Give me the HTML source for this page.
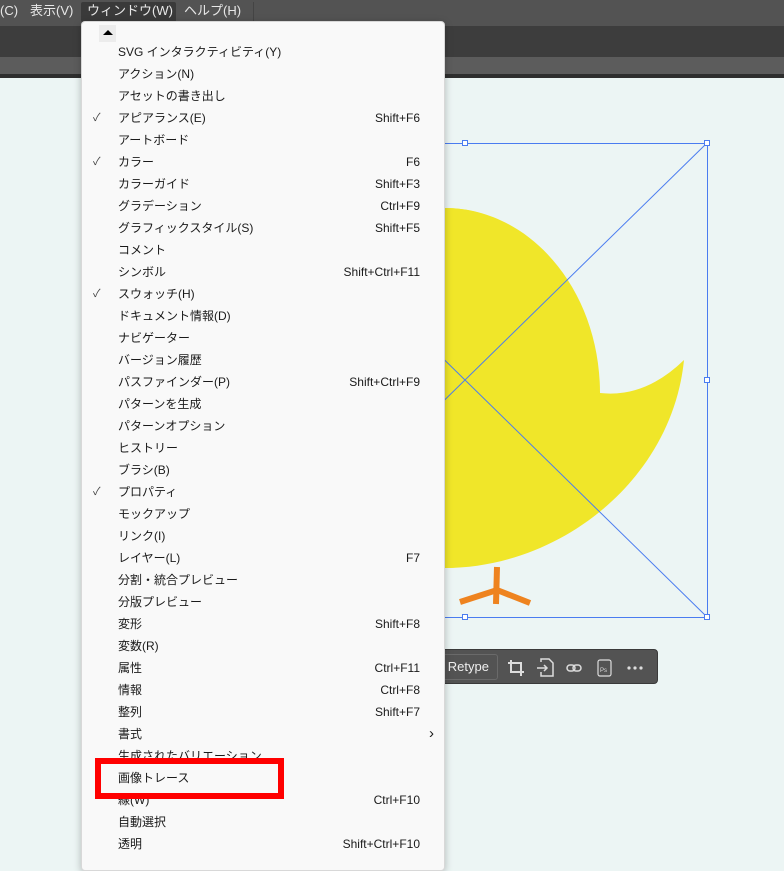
<!DOCTYPE html>
<html><head><meta charset="utf-8"><style>
*{margin:0;padding:0;box-sizing:border-box}
body{width:784px;height:859px;overflow:hidden;background:#ecf5f4;font-family:"Liberation Sans","Noto Sans CJK JP",sans-serif;position:relative}
.bar{position:absolute;left:0;top:0;width:784px;height:26px;background:#535353;color:#e8e8e8;font-size:13px}
.bar span{position:absolute;top:0;line-height:22px}
.band{position:absolute;left:0;top:26px;width:784px;height:31px;background:#3d3d3d}
.band2{position:absolute;left:0;top:57px;width:784px;height:17px;background:#5c5c5c}
.band3{position:absolute;left:0;top:74px;width:784px;height:4px;background:#2e2e2e}
.menu{position:absolute;left:81px;top:21px;width:364px;height:850px;background:#f9f9f9;border:1px solid #d8d8d8;border-radius:4px;box-shadow:0 2px 8px rgba(0,0,0,.25)}
.it{position:absolute;left:0;width:362px;height:22px;font-size:12px;color:#1a1a1a;line-height:22px}
.it .t{position:absolute;left:36px}
.it .s{position:absolute;right:24px}
.it .c{position:absolute;left:11px;font-size:11px;color:#444}
.red{position:absolute;left:95px;top:758px;width:189px;height:41px;border:6px solid #ff0000}
.tb{position:absolute;left:398px;top:649px;width:260px;height:35px;background:#535353;border-radius:4px;border:1px solid #3a3a3a}
</style></head><body>
<div class="bar">
<span style="left:0">(C)</span>
<span style="left:30px">表示(V)</span>
<div style="position:absolute;left:81px;top:2px;width:95px;height:20px;background:#3a3a3a;border-radius:2px"></div>
<span style="left:87px">ウィンドウ(W)</span>
<span style="left:184px">ヘルプ(H)</span>
<div style="position:absolute;left:253px;top:2px;width:1px;height:20px;background:#444"></div>
</div>
<div class="band"></div><div class="band2"></div><div class="band3"></div>
<svg style="position:absolute;left:0;top:0" width="784" height="859">
<ellipse cx="445" cy="388" rx="150" ry="180" fill="#f0e629"/>
<path d="M445 208 C530 208 600 290 600 393 Q645 398 684 360 C672 480 560 568 445 568 Z" fill="#f0e629"/>
<g stroke="#ee831f" stroke-width="6" fill="none"><path d="M497 567 L496 604"/><path d="M460 602 L497 590 L530 603"/></g>
<g stroke="#4a7cf0" stroke-width="1" fill="none">
<rect x="223.5" y="143.5" width="484" height="474"/>
<line x1="707" y1="143" x2="223" y2="617"/><line x1="223" y1="143" x2="707" y2="617"/>
</g>
<g fill="#fff" stroke="#4a7cf0"><rect x="462.5" y="140.5" width="5" height="5"/><rect x="704.5" y="140.5" width="5" height="5"/><rect x="704.5" y="377.5" width="5" height="5"/><rect x="704.5" y="614.5" width="5" height="5"/><rect x="462.5" y="614.5" width="5" height="5"/></g>
</svg>
<div class="tb">
<div style="position:absolute;left:40px;top:4px;width:59px;height:26px;border:1px solid #6a6a6a;border-radius:3px;color:#eee;font-size:13px;line-height:24px;text-align:right;padding-right:8px">Retype</div>
<svg style="position:absolute;left:108px;top:8px" width="140" height="20" fill="none" stroke="#ddd" stroke-width="2">
<path d="M4 2 V14 H17 M1 5 H14 V18"/>
<path d="M34 4 V1 H42 L46 5 V18 H34 V14 M30 10 H40 M37 7 L40 10 L37 13" stroke-width="1.5"/>
<rect x="60" y="7" width="8" height="6" rx="3" stroke-width="1.5"/><rect x="66" y="7" width="8" height="6" rx="3" stroke-width="1.5"/>
<rect x="91" y="2" width="13" height="16" rx="2" stroke-width="1.2"/>
<text x="93" y="14" font-size="6" fill="#ddd" stroke="none" font-family="Liberation Sans">Ps</text>
<circle cx="122" cy="10" r="1.6" fill="#ddd" stroke="none"/><circle cx="128" cy="10" r="1.6" fill="#ddd" stroke="none"/><circle cx="134" cy="10" r="1.6" fill="#ddd" stroke="none"/>
</svg>
</div>
<div class="menu">
<div style="position:absolute;left:17px;top:3px;width:17px;height:17px;background:#ececec"></div>
<div style="position:absolute;left:21px;top:8px;width:0;height:0;border-left:5px solid transparent;border-right:5px solid transparent;border-bottom:5px solid #000"></div>
<div id="items"></div>
</div>
<div class="red"></div>
<script>
var L=[["SVG インタラクティビティ(Y)"],["アクション(N)"],["アセットの書き出し"],["アピアランス(E)","Shift+F6",1],["アートボード"],["カラー","F6",1],["カラーガイド","Shift+F3"],["グラデーション","Ctrl+F9"],["グラフィックスタイル(S)","Shift+F5"],["コメント"],["シンボル","Shift+Ctrl+F11"],["スウォッチ(H)","",1],["ドキュメント情報(D)"],["ナビゲーター"],["バージョン履歴"],["パスファインダー(P)","Shift+Ctrl+F9"],["パターンを生成"],["パターンオプション"],["ヒストリー"],["ブラシ(B)"],["プロパティ","",1],["モックアップ"],["リンク(I)"],["レイヤー(L)","F7"],["分割・統合プレビュー"],["分版プレビュー"],["変形","Shift+F8"],["変数(R)"],["属性","Ctrl+F11"],["情報","Ctrl+F8"],["整列","Shift+F7"],["書式","›"],["生成されたバリエーション"],["画像トレース"],["線(W)","Ctrl+F10"],["自動選択"],["透明","Shift+Ctrl+F10"]];
var h="";L.forEach(function(a,i){var top=19+i*22;var s=a[1]||"";var st=s=="›"?' style="right:10px;font-size:15px"':'';h+='<div class="it" style="top:'+top+'px">'+(a[2]?'<span class="c">✓</span>':'')+'<span class="t">'+a[0]+'</span><span class="s"'+st+'>'+s+'</span></div>'});
document.getElementById("items").innerHTML=h;
</script>
</body></html>
